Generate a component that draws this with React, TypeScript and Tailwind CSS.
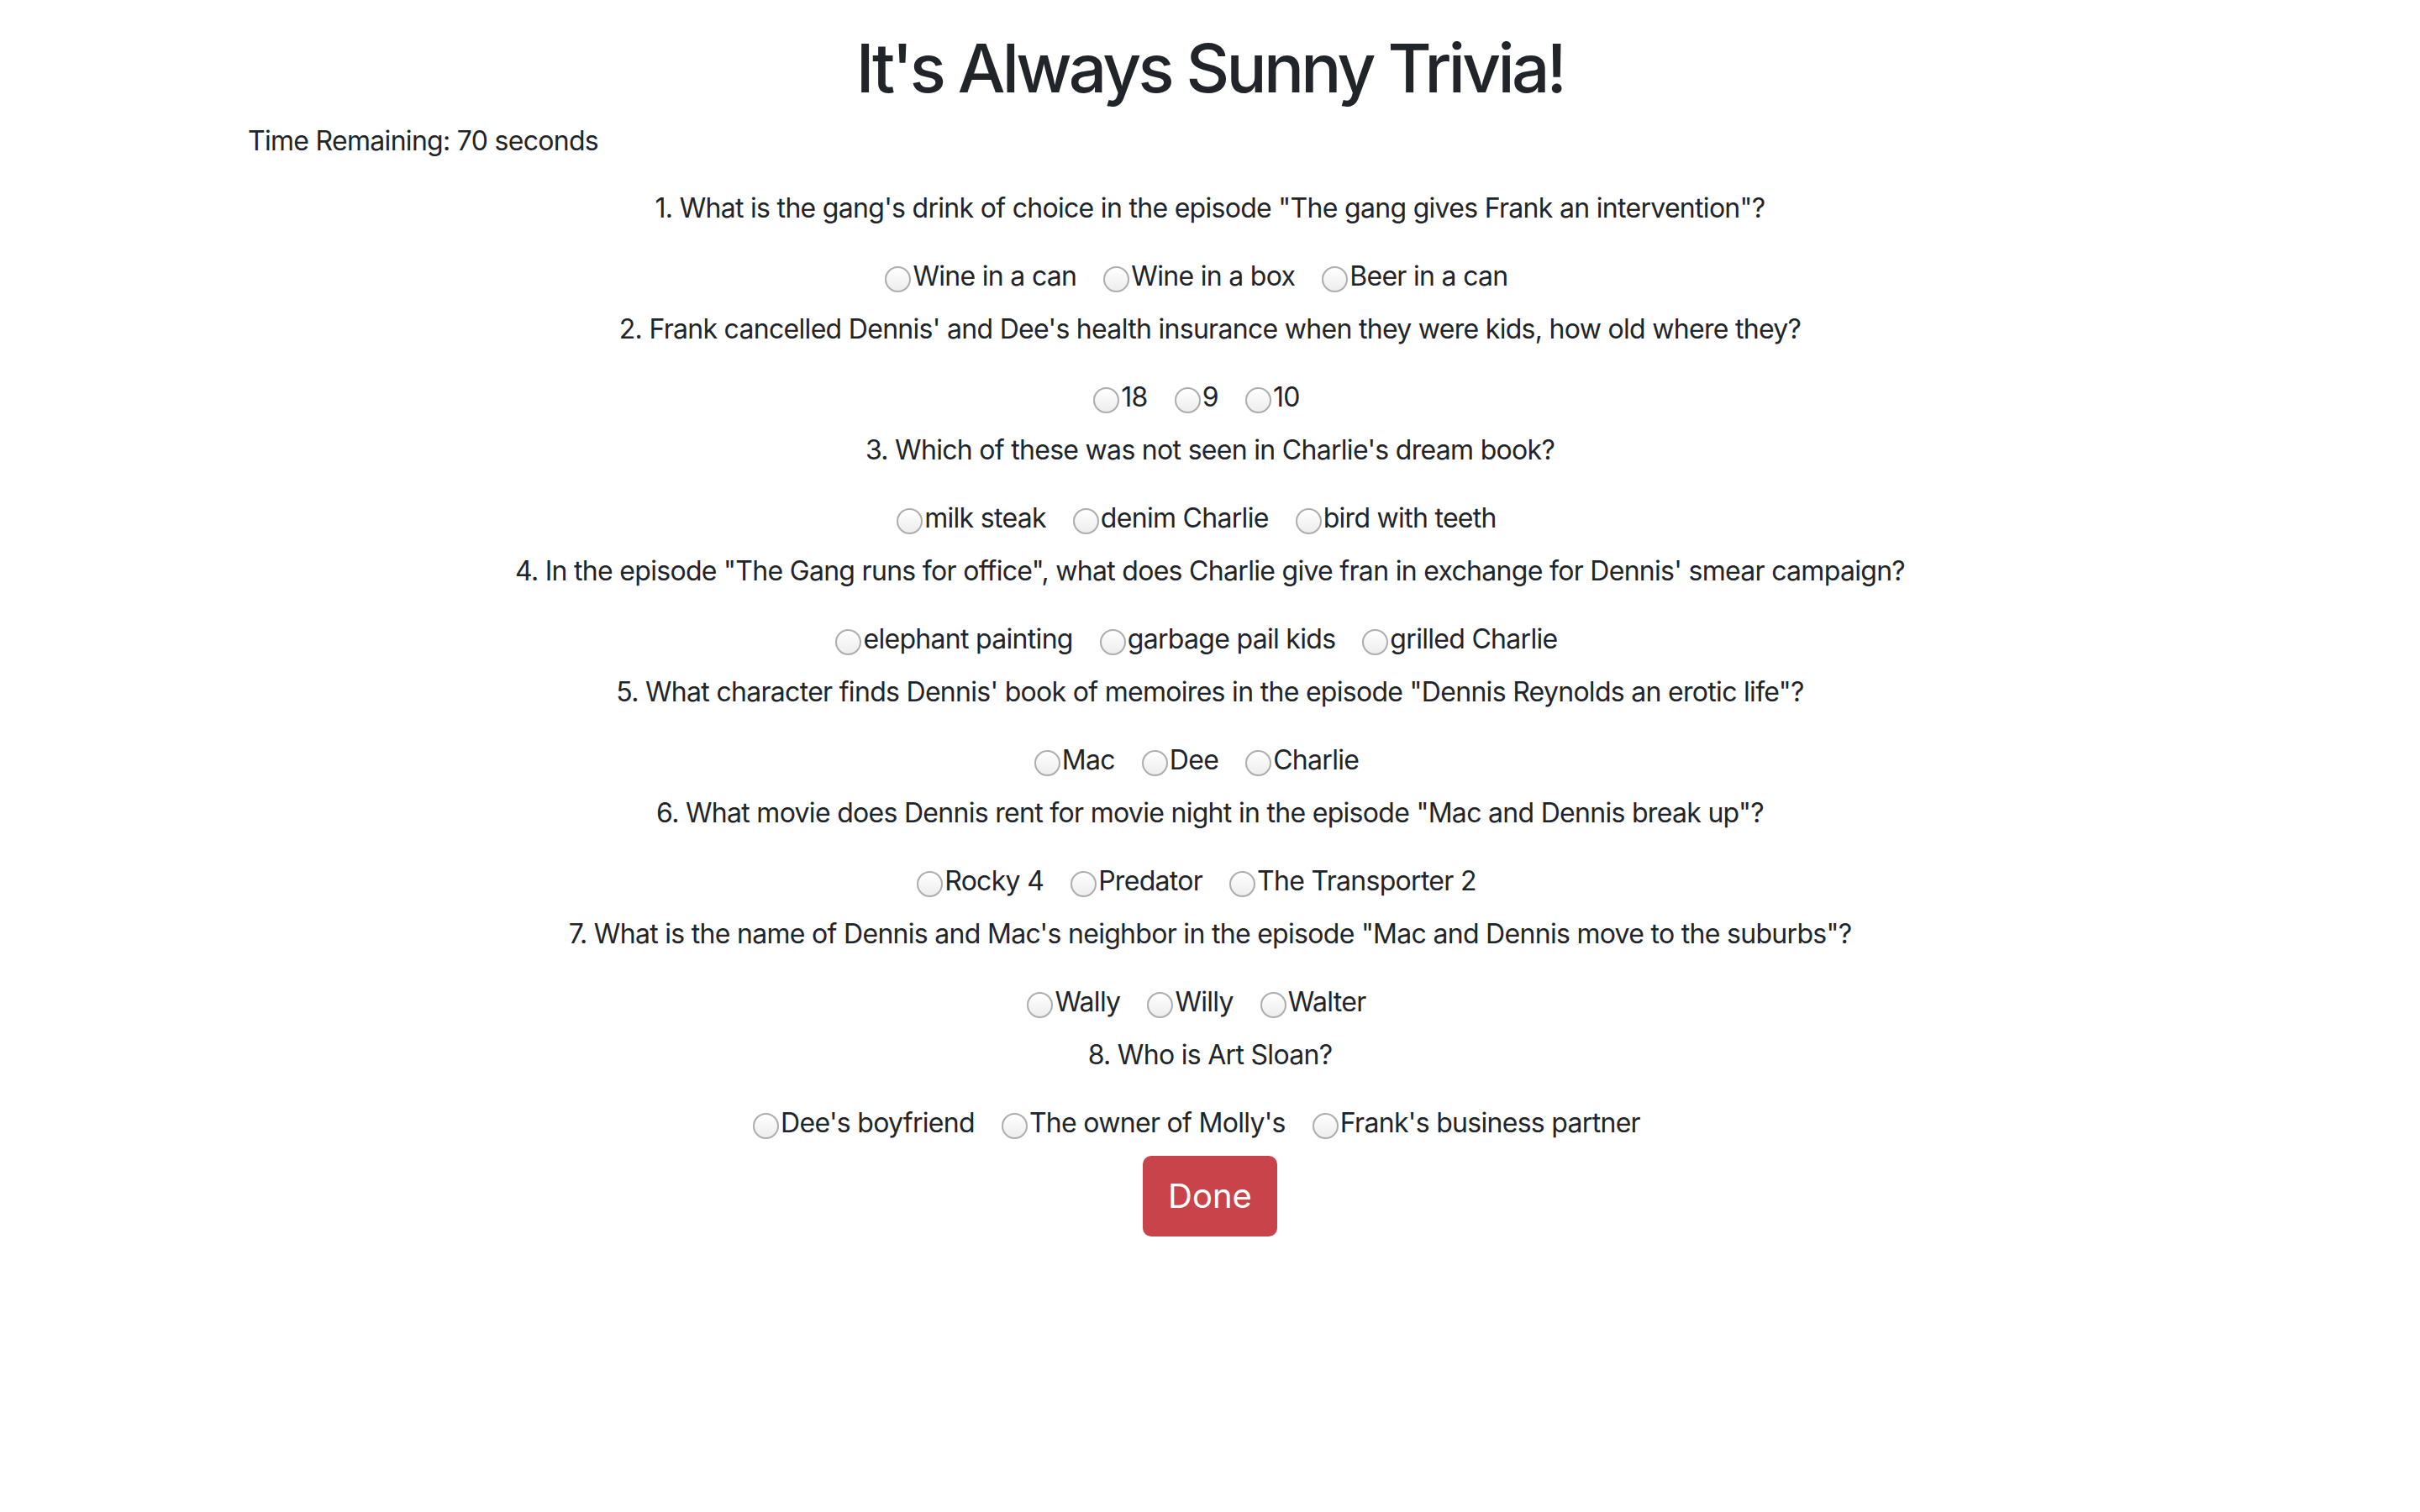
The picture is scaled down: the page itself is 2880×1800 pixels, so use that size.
import React from "react";

const questions = [
  {
    q: '1. What is the gang\'s drink of choice in the episode "The gang gives Frank an intervention"?',
    options: ["Wine in a can", "Wine in a box", "Beer in a can"],
  },
  {
    q: "2. Frank cancelled Dennis' and Dee's health insurance when they were kids, how old where they?",
    options: ["18", "9", "10"],
  },
  {
    q: "3. Which of these was not seen in Charlie's dream book?",
    options: ["milk steak", "denim Charlie", "bird with teeth"],
  },
  {
    q: '4. In the episode "The Gang runs for office", what does Charlie give fran in exchange for Dennis\' smear campaign?',
    options: ["elephant painting", "garbage pail kids", "grilled Charlie"],
  },
  {
    q: '5. What character finds Dennis\' book of memoires in the episode "Dennis Reynolds an erotic life"?',
    options: ["Mac", "Dee", "Charlie"],
  },
  {
    q: '6. What movie does Dennis rent for movie night in the episode "Mac and Dennis break up"?',
    options: ["Rocky 4", "Predator", "The Transporter 2"],
  },
  {
    q: '7. What is the name of Dennis and Mac\'s neighbor in the episode "Mac and Dennis move to the suburbs"?',
    options: ["Wally", "Willy", "Walter"],
  },
  {
    q: "8. Who is Art Sloan?",
    options: ["Dee's boyfriend", "The owner of Molly's", "Frank's business partner"],
  },
];

function Radio() {
  return (
    <span className="relative top-[3px] mr-[2px] inline-block h-[31px] w-[31px] shrink-0 rounded-full border-2 border-[#adadad] bg-gradient-to-b from-white to-[#ededed]" />
  );
}

export default function App() {
  return (
    <div className="min-h-screen bg-white text-[#212529] font-['Inter','Helvetica_Neue',Arial,sans-serif]">
      <h1 className="pt-[33px] text-center text-[80px] leading-[96px] font-medium tracking-[-3.7px]">
        It's Always Sunny Trivia!
      </h1>

      <div className="mt-[15px] pl-[295px] text-[32px] leading-[48px] tracking-[-0.7px]">
        Time Remaining: 70 seconds
      </div>

      <div className="mt-[32px] flex flex-col items-center gap-[15px] tracking-[-0.7px]">
        {questions.map((item, i) => (
          <div key={i} className="w-full text-center">
            <p className="text-[32px] leading-[48px]">{item.q}</p>
            <div className="mt-[33px] flex h-[48px] items-center justify-center">
              {item.options.map((opt) => (
                <label
                  key={opt}
                  className="mr-[32px] flex items-center text-[32px] leading-[48px]"
                >
                  <Radio />
                  {opt}
                </label>
              ))}
            </div>
          </div>
        ))}

        <button className="flex h-[96px] w-[160px] items-center justify-center rounded-[10px] bg-[#c9434a] text-[40px] tracking-normal text-white">
          Done
        </button>
      </div>
    </div>
  );
}
